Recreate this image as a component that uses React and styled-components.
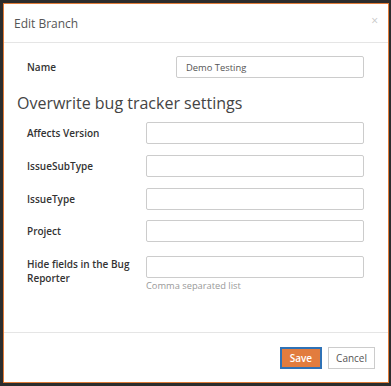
import styled, { createGlobalStyle } from 'styled-components';

const GlobalStyle = createGlobalStyle`
  html, body {
    margin: 0;
    padding: 0;
    background: #2c2c2c;
    font-family: 'Open Sans', 'Liberation Sans', sans-serif;
  }
`;

const Backdrop = styled.div`
  width: 391px;
  height: 386px;
  padding: 3px 2px 3px 3px;
  box-sizing: border-box;
`;

const Modal = styled.div`
  height: 380px;
  background: #fff;
  border: 1px solid #e07b39;
  display: flex;
  flex-direction: column;
  box-sizing: border-box;
`;

const Header = styled.div`
  height: 39px;
  flex: none;
  box-sizing: border-box;
  border-bottom: 1px solid #e5e5e5;
  display: flex;
  align-items: center;
  justify-content: space-between;
  padding: 0 10px 0 10px;
`;

const Title = styled.h4`
  margin: 0;
  font-size: 12px;
  font-weight: 400;
  color: #555;
`;

const Close = styled.span`
  font-size: 12px;
  color: #c8c8c8;
  line-height: 1;
  margin-top: -5px;
`;

const Body = styled.div`
  flex: 1;
  padding: 13px 24px 0 23px;
`;

const Row = styled.div`
  display: grid;
  grid-template-columns: ${(p) => p.$labelWidth}px 1fr;
  align-items: ${(p) => (p.$top ? 'start' : 'center')};
  margin-bottom: ${(p) => p.$gap ?? 11}px;
`;

const Label = styled.label`
  font-size: 10px;
  font-weight: 600;
  color: #333;
  line-height: 14px;
  padding-right: 12px;
  padding-top: ${(p) => (p.$top ? '4px' : '0')};
`;

const Input = styled.input`
  height: 22px;
  box-sizing: border-box;
  width: 100%;
  border: 1px solid #ccc;
  border-radius: 2px;
  padding: 0 9px;
  font-family: inherit;
  font-size: 9.4px;
  color: #555;
  outline: none;
`;

const Section = styled.h3`
  margin: 12px 0 6px -10px;
  font-size: 16px;
  line-height: 26px;
  font-weight: 400;
  color: #444;
`;

const Help = styled.div`
  font-size: 9.3px;
  color: #999;
  margin-top: 1px;
`;

const Footer = styled.div`
  flex: none;
  border-top: 1px solid #e5e5e5;
  display: flex;
  justify-content: flex-end;
  gap: 6px;
  padding: 14px 13px 13px;
`;

const Button = styled.button`
  height: 22px;
  box-sizing: border-box;
  font-family: inherit;
  font-size: 10px;
  padding: 0 ${(p) => (p.$primary ? '8px' : '7px')};
  border-radius: 0;
  cursor: pointer;
  background: ${(p) => (p.$primary ? '#e27c3e' : '#fff')};
  color: ${(p) => (p.$primary ? '#fff' : '#555')};
  font-weight: ${(p) => (p.$primary ? 600 : 400)};
  border: ${(p) => (p.$primary ? '2px solid #2f72b6' : '1px solid #ccc')};
`;

const fields = ['Affects Version', 'IssueSubType', 'IssueType', 'Project'];

export default function App() {
  return (
    <>
      <GlobalStyle />
      <Backdrop>
        <Modal>
          <Header>
            <Title>Edit Branch</Title>
            <Close>×</Close>
          </Header>
          <Body>
            <Row $labelWidth={149}>
              <Label>Name</Label>
              <Input defaultValue="Demo Testing" />
            </Row>
            <Section>Overwrite bug tracker settings</Section>
            {fields.map((f, i) => (
              <Row key={f} $labelWidth={119} $gap={i === 2 ? 10 : 11}>
                <Label>{f}</Label>
                <Input />
              </Row>
            ))}
            <Row $labelWidth={119} $top>
              <Label $top>Hide fields in the Bug Reporter</Label>
              <div>
                <Input />
                <Help>Comma separated list</Help>
              </div>
            </Row>
          </Body>
          <Footer>
            <Button $primary>Save</Button>
            <Button>Cancel</Button>
          </Footer>
        </Modal>
      </Backdrop>
    </>
  );
}
